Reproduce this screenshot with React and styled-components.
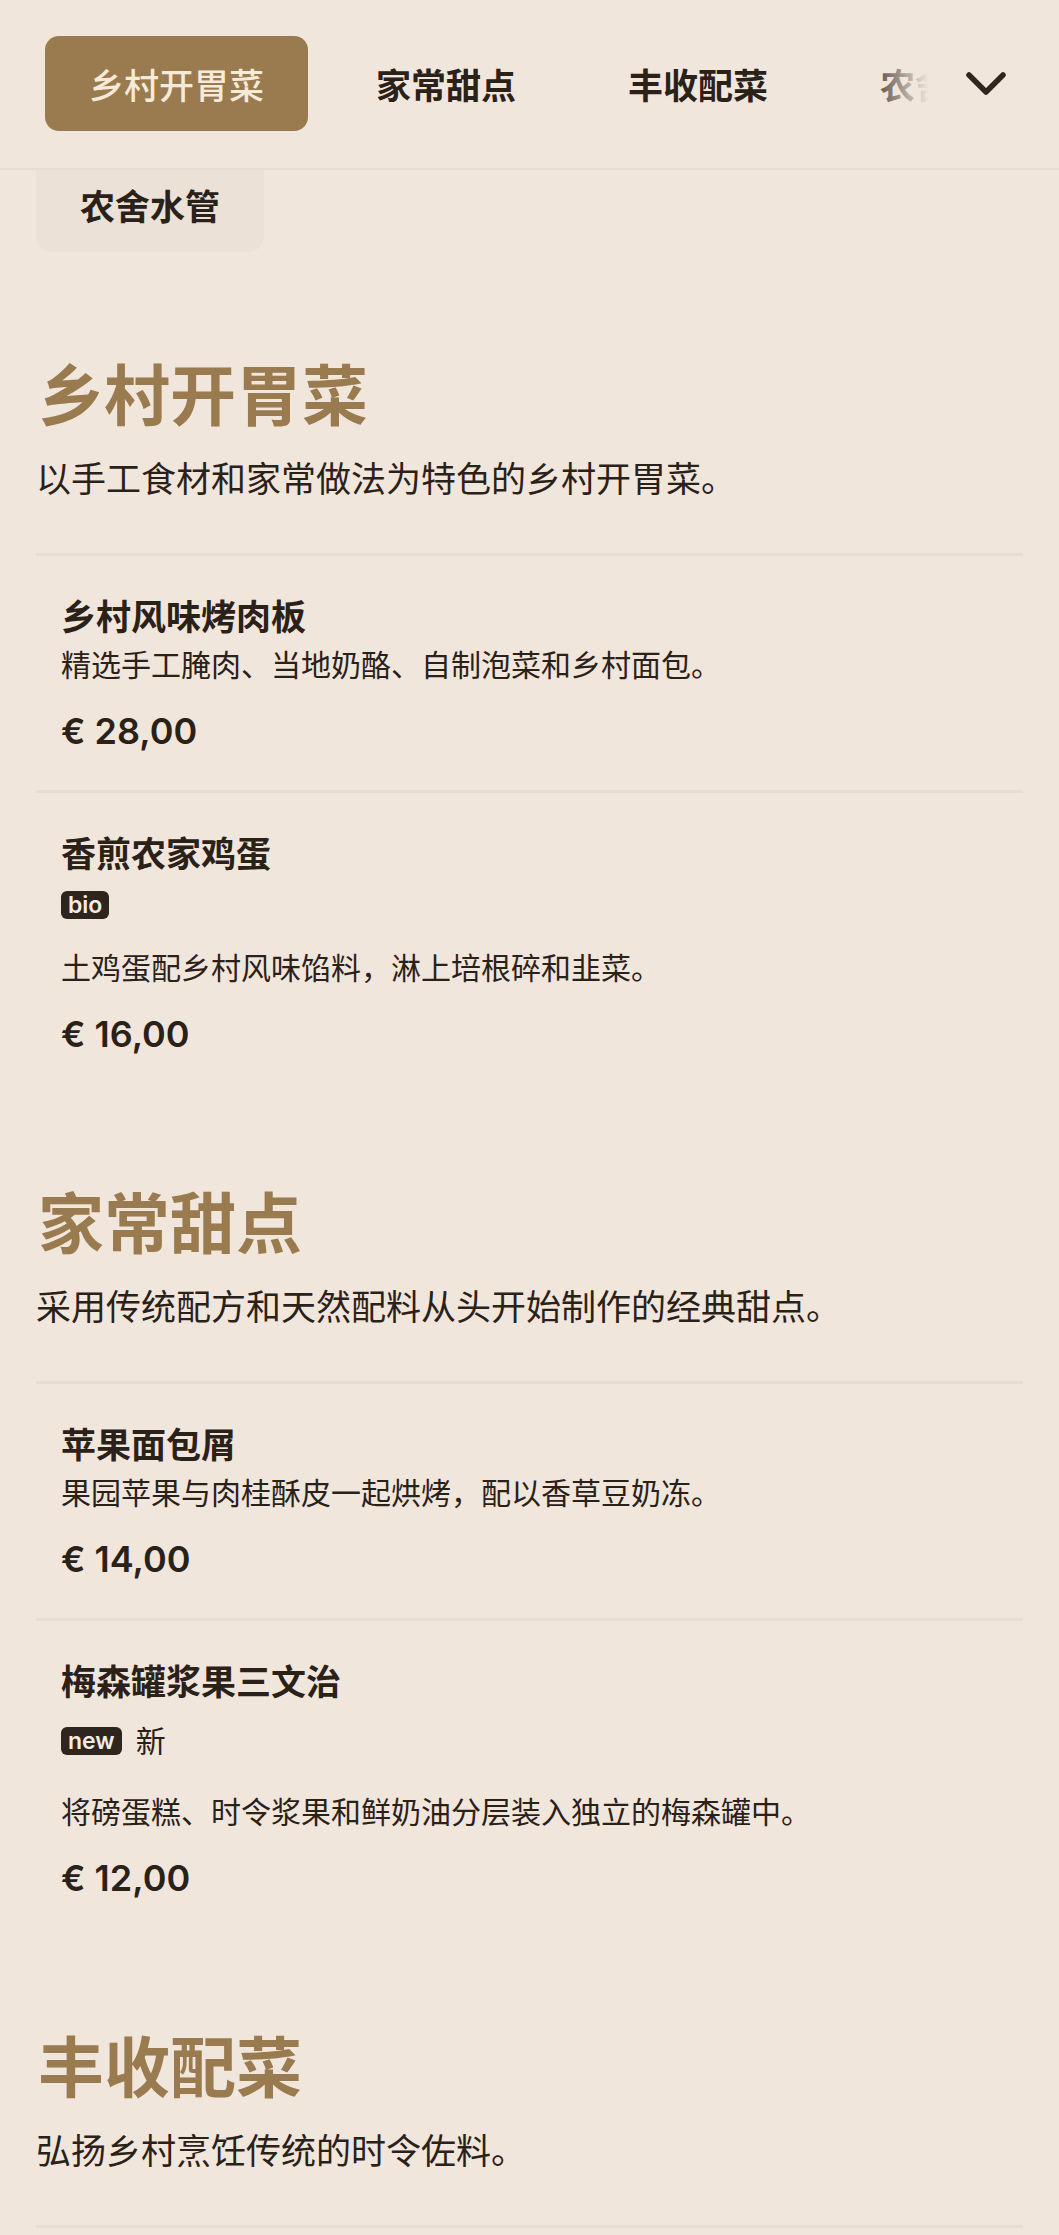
import styled, { createGlobalStyle } from 'styled-components'

const GlobalStyle = createGlobalStyle`
  * { box-sizing: border-box; }
  body {
    margin: 0;
    background: #f1e6dc;
    color: #2a2119;
    font-family: "Inter", "Noto Sans CJK SC", sans-serif;
  }
`

const categories = [
  { id: 'starters', name: '乡村开胃菜' },
  { id: 'desserts', name: '家常甜点' },
  { id: 'sides', name: '丰收配菜' },
  { id: 'water', name: '农舍水管' },
]

const sections = [
  {
    id: 'starters',
    title: '乡村开胃菜',
    description: '以手工食材和家常做法为特色的乡村开胃菜。',
    items: [
      { id: 1, name: '乡村风味烤肉板', description: '精选手工腌肉、当地奶酪、自制泡菜和乡村面包。', price: '€ 28,00' },
      { id: 2, name: '香煎农家鸡蛋', tags: [{ label: 'bio' }], description: '土鸡蛋配乡村风味馅料，淋上培根碎和韭菜。', price: '€ 16,00' },
    ],
  },
  {
    id: 'desserts',
    title: '家常甜点',
    description: '采用传统配方和天然配料从头开始制作的经典甜点。',
    items: [
      { id: 3, name: '苹果面包屑', description: '果园苹果与肉桂酥皮一起烘烤，配以香草豆奶冻。', price: '€ 14,00' },
      { id: 4, name: '梅森罐浆果三文治', tags: [{ label: 'new', text: '新' }], description: '将磅蛋糕、时令浆果和鲜奶油分层装入独立的梅森罐中。', price: '€ 12,00' },
    ],
  },
  {
    id: 'sides',
    title: '丰收配菜',
    description: '弘扬乡村烹饪传统的时令佐料。',
    items: [
      { id: 5, name: '烤根茎蔬菜', description: '胡萝卜、欧防风和甜菜根配迷迭香与蜂蜜。', price: '€ 9,00' },
      { id: 6, name: '奶油土豆泥', description: '黄油与鲜奶油搅打而成的土豆泥。', price: '€ 7,00' },
    ],
  },
]

const Header = styled.header`
  position: sticky;
  top: 0;
  z-index: 2;
  display: flex;
  align-items: center;
  gap: 27px;
  padding: 36px 49px 37px 45px;
  background: #f1e6dc;
  border-bottom: 2px solid #e8ddd2;
`

const NavScroll = styled.div`
  position: relative;
  flex: 1;
  overflow: hidden;
`

const Tabs = styled.nav`
  display: flex;
  gap: 24px;
  white-space: nowrap;
`

const Tab = styled.button`
  flex: none;
  height: 95px;
  padding: 0 44px;
  border: none;
  border-radius: 14px;
  font-family: inherit;
  font-size: 35px;
  font-weight: ${p => (p.$active ? 500 : 600)};
  color: ${p => (p.$active ? '#f6ead9' : '#2a2119')};
  background: ${p => (p.$active ? '#9a7a4f' : 'transparent')};
`

const Fade = styled.div`
  position: absolute;
  top: 0;
  right: 0;
  bottom: 0;
  width: 76px;
  background: linear-gradient(to right, rgba(241, 230, 220, 0), #f1e6dc 92%);
  pointer-events: none;
`

const MoreButton = styled.button`
  flex: none;
  width: 48px;
  height: 48px;
  display: flex;
  align-items: center;
  justify-content: center;
  padding: 0;
  border: none;
  background: none;
  color: #2f261f;
`

const Content = styled.main`
  padding: 0 36px 60px;
`

const OverflowTabs = styled.div`
  display: flex;
  margin-top: -14px;
`

const OverflowTab = styled.button`
  height: 96px;
  padding: 0 44px;
  border: none;
  border-radius: 16px;
  background: #ebe1d7;
  font-family: inherit;
  font-size: 35px;
  font-weight: 600;
  color: #2a2119;
`

const Section = styled.section`
  padding-top: ${p => (p.$first ? '104px' : '91px')};
`

const SectionTitle = styled.h2`
  margin: 0 0 0 2px;
  font-size: 66px;
  line-height: 80px;
  font-weight: 700;
  color: #9a7a4f;
`

const SectionText = styled.p`
  margin: 20px 0 51px;
  font-size: 35px;
  line-height: 46px;
`

const Item = styled.article`
  padding: 39px 25px 35px;
  border-top: 3px solid #e8ddd2;
`

const ItemName = styled.h3`
  margin: 0;
  font-size: 35px;
  line-height: 44px;
  font-weight: 700;
`

const Tags = styled.div`
  display: flex;
  align-items: center;
  gap: 14px;
  margin-top: 15px;
`

const Badge = styled.span`
  display: inline-flex;
  align-items: center;
  height: 28px;
  padding: 0 7px;
  border-radius: 6px;
  background: #2e251e;
  color: #f4ebe1;
  font-size: 23px;
  font-weight: 600;
  line-height: 1;
`

const TagText = styled.span`
  font-size: 30px;
  line-height: 44px;
`

const ItemText = styled.p`
  margin: ${p => (p.$afterTags ? '29px' : '6px')} 0 0;
  font-size: 30px;
  line-height: 40px;
`

const Price = styled.div`
  margin-top: 22px;
  font-size: 36px;
  line-height: 48px;
  font-weight: 600;
`

function ChevronDown() {
  return (
    <svg width="42" height="26" viewBox="0 0 42 26" fill="none">
      <path d="M4 4 L21 21 L38 4" stroke="currentColor" strokeWidth="5.5" strokeLinecap="round" strokeLinejoin="round" />
    </svg>
  )
}

function MenuItem({ item }) {
  const hasTags = item.tags && item.tags.length > 0
  return (
    <Item>
      <ItemName>{item.name}</ItemName>
      {hasTags && (
        <Tags>
          {item.tags.map(tag => (
            <Badge key={tag.label}>{tag.label}</Badge>
          ))}
          {item.tags.filter(t => t.text).map(tag => (
            <TagText key={tag.text}>{tag.text}</TagText>
          ))}
        </Tags>
      )}
      <ItemText $afterTags={hasTags}>{item.description}</ItemText>
      <Price>{item.price}</Price>
    </Item>
  )
}

export default function App() {
  return (
    <>
      <GlobalStyle />
      <Header>
        <NavScroll>
          <Tabs>
            {categories.map((c, i) => (
              <Tab key={c.id} $active={i === 0}>{c.name}</Tab>
            ))}
          </Tabs>
          <Fade />
        </NavScroll>
        <MoreButton aria-label="更多分类">
          <ChevronDown />
        </MoreButton>
      </Header>
      <Content>
        <OverflowTabs>
          <OverflowTab>{categories[3].name}</OverflowTab>
        </OverflowTabs>
        {sections.map((s, i) => (
          <Section key={s.id} $first={i === 0}>
            <SectionTitle>{s.title}</SectionTitle>
            <SectionText>{s.description}</SectionText>
            {s.items.map(item => (
              <MenuItem key={item.id} item={item} />
            ))}
          </Section>
        ))}
      </Content>
    </>
  )
}
